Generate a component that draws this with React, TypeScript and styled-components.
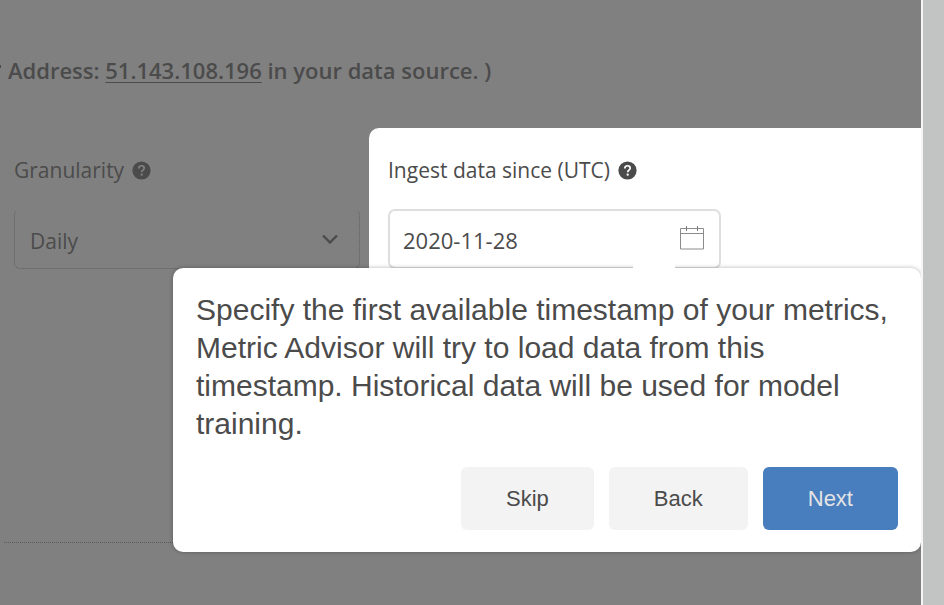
import React, { useState } from "react";
import styled, { createGlobalStyle } from "styled-components";

const ui = `"Open Sans", "Noto Sans", sans-serif`;
const ink = "#4b4b4b";

const GlobalStyle = createGlobalStyle`
  *, *::before, *::after { box-sizing: border-box; }
  body { margin: 0; background: #808080; color: ${ink}; font-family: ${ui}; }
`;

const Page = styled.div`
  display: grid;
  grid-template-columns: minmax(0, 1fr) 2px 21px;
  min-height: 100vh;
`;

const Main = styled.main`
  background: #808080;
  padding-top: 54px;
  overflow: hidden;
`;

const Edge = styled.div`
  background: #f5f5f5;
`;

const ScrollTrack = styled.div`
  background: #c1c4c2;
`;

const Notice = styled.p`
  position: relative;
  margin: 0;
  padding-left: 8px;
  font-size: 22px;
  font-weight: 600;
  line-height: 32px;

  &::before {
    content: "";
    position: absolute;
    left: 0;
    top: 11px;
    width: 1px;
    height: 3px;
    background: ${ink};
  }
`;

const Address = styled.span`
  text-decoration: underline;
  text-decoration-thickness: 1px;
  text-underline-offset: 3px;
`;

const Fields = styled.section`
  position: relative;
  display: grid;
  grid-template-columns: 369px minmax(0, 1fr);
  margin-top: 42px;
`;

const Field = styled.div<{ $active?: boolean }>`
  display: flex;
  flex-direction: column;
  gap: 25px;
  padding: ${(p) => (p.$active ? "28px 20px 40px 19px" : "28px 9px 40px 14px")};
  background: ${(p) => (p.$active ? "#fff" : "transparent")};
  border-top-left-radius: 10px;
`;

const LabelRow = styled.div`
  display: flex;
  align-items: center;
  gap: 8px;
  font-size: 21px;
  line-height: 28px;
`;

const SelectBox = styled.div`
  display: grid;
  align-items: center;

  & > * { grid-area: 1 / 1; }
  & > svg { justify-self: end; margin-right: 22px; pointer-events: none; }
`;

const Select = styled.select`
  appearance: none;
  width: 100%;
  height: 60px;
  padding: 4px 16px 0 15px;
  border: 1px dotted #5f5f5f;
  border-top-color: transparent;
  border-radius: 6px;
  background: transparent;
  color: ${ink};
  font: 21px ${ui};
`;

const DateBox = styled.div`
  display: flex;
  align-items: center;
  width: 333px;
  height: 60px;
  padding: 0 15px 2px 13px;
  border: 2px solid #dedede;
  border-radius: 7px;
  background: #fff;
`;

const DateInput = styled.input`
  flex: 1;
  min-width: 0;
  padding: 4px 0 0;
  border: 0;
  outline: 0;
  background: transparent;
  color: ${ink};
  font: 22px ${ui};
`;

const IconButton = styled.button`
  display: flex;
  padding: 0;
  border: 0;
  background: none;
`;

const Popover = styled.div`
  position: absolute;
  top: 140px;
  left: 173px;
  right: 0;
  padding: 23px 23px 22px;
  border-radius: 10px;
  background: #fff;
  box-shadow: 0 0 4px rgba(0, 0, 0, 0.3);

  &::before {
    content: "";
    position: absolute;
    top: -4px;
    left: 460px;
    width: 42px;
    height: 8px;
    background: #fff;
  }
`;

const Message = styled.p`
  margin: 0;
  font: 30px/38px "Liberation Sans", Arial, sans-serif;
`;

const Actions = styled.div`
  display: flex;
  justify-content: flex-end;
  gap: 15px;
  margin-top: 24px;
`;

const Button = styled.button<{ $primary?: boolean }>`
  height: 63px;
  padding: 0 45px;
  border: 0;
  border-radius: 6px;
  background: ${(p) => (p.$primary ? "#487dbe" : "#f3f3f3")};
  color: ${(p) => (p.$primary ? "#e4e4e4" : ink)};
  font: 22px "Liberation Sans", Arial, sans-serif;
`;

const Divider = styled.hr`
  margin: 233px 0 0 4px;
  border: 0;
  border-top: 1px dotted #5a5a5a;
`;

const HelpIcon = ({ mark }: { mark: string }) => (
  <svg width="19" height="19" viewBox="0 0 20 20" aria-hidden="true">
    <circle cx="10" cy="10" r="9.6" fill={ink} />
    <path
      d="M7.2 7.8C7.2 6 8.4 5 10 5s2.8 1 2.8 2.5c0 2.1-2.6 2.3-2.6 4.4"
      fill="none"
      stroke={mark}
      strokeWidth="1.8"
    />
    <circle cx="10.2" cy="14.4" r="1.2" fill={mark} />
  </svg>
);

const Chevron = () => (
  <svg width="16" height="10" viewBox="0 0 16 10" aria-hidden="true">
    <path d="M1 1.5l7 7 7-7" fill="none" stroke={ink} strokeWidth="2.4" />
  </svg>
);

const CalendarIcon = () => (
  <svg width="24" height="24" viewBox="0 0 24 24" fill="none" aria-hidden="true">
    <path d="M.5 2.5h23v20.500H.5zM.5 7.500h23" stroke="#8c8c8c" />
    <path d="M6.500 0v5M17.500 0v5" stroke="#777" />
  </svg>
);

export default function App() {
  const [date, setDate] = useState("2020-11-28");
  return (
    <>
      <GlobalStyle />
      <Page>
        <Main>
          <Notice>
            Address: <Address>51.143.108.196</Address> in your data source. )
          </Notice>
          <Fields>
            <Field>
              <LabelRow>
                <label htmlFor="granularity">Granularity</label>
                <HelpIcon mark="#808080" />
              </LabelRow>
              <SelectBox>
                <Select id="granularity" defaultValue="Daily">
                  <option>Daily</option>
                </Select>
                <Chevron />
              </SelectBox>
            </Field>
            <Field $active>
              <LabelRow>
                <label htmlFor="since">Ingest data since (UTC)</label>
                <HelpIcon mark="#fff" />
              </LabelRow>
              <DateBox>
                <DateInput id="since" value={date} onChange={(e) => setDate(e.target.value)} />
                <IconButton aria-label="Open calendar">
                  <CalendarIcon />
                </IconButton>
              </DateBox>
            </Field>
            <Popover role="dialog" aria-label="Ingestion start">
              <Message>
                Specify the first available timestamp of your metrics, Metric Advisor will try to
                load data from this timestamp. Historical data will be used for model training.
              </Message>
              <Actions>
                <Button>Skip</Button>
                <Button>Back</Button>
                <Button $primary>Next</Button>
              </Actions>
            </Popover>
          </Fields>
          <Divider />
        </Main>
        <Edge />
        <ScrollTrack />
      </Page>
    </>
  );
}
